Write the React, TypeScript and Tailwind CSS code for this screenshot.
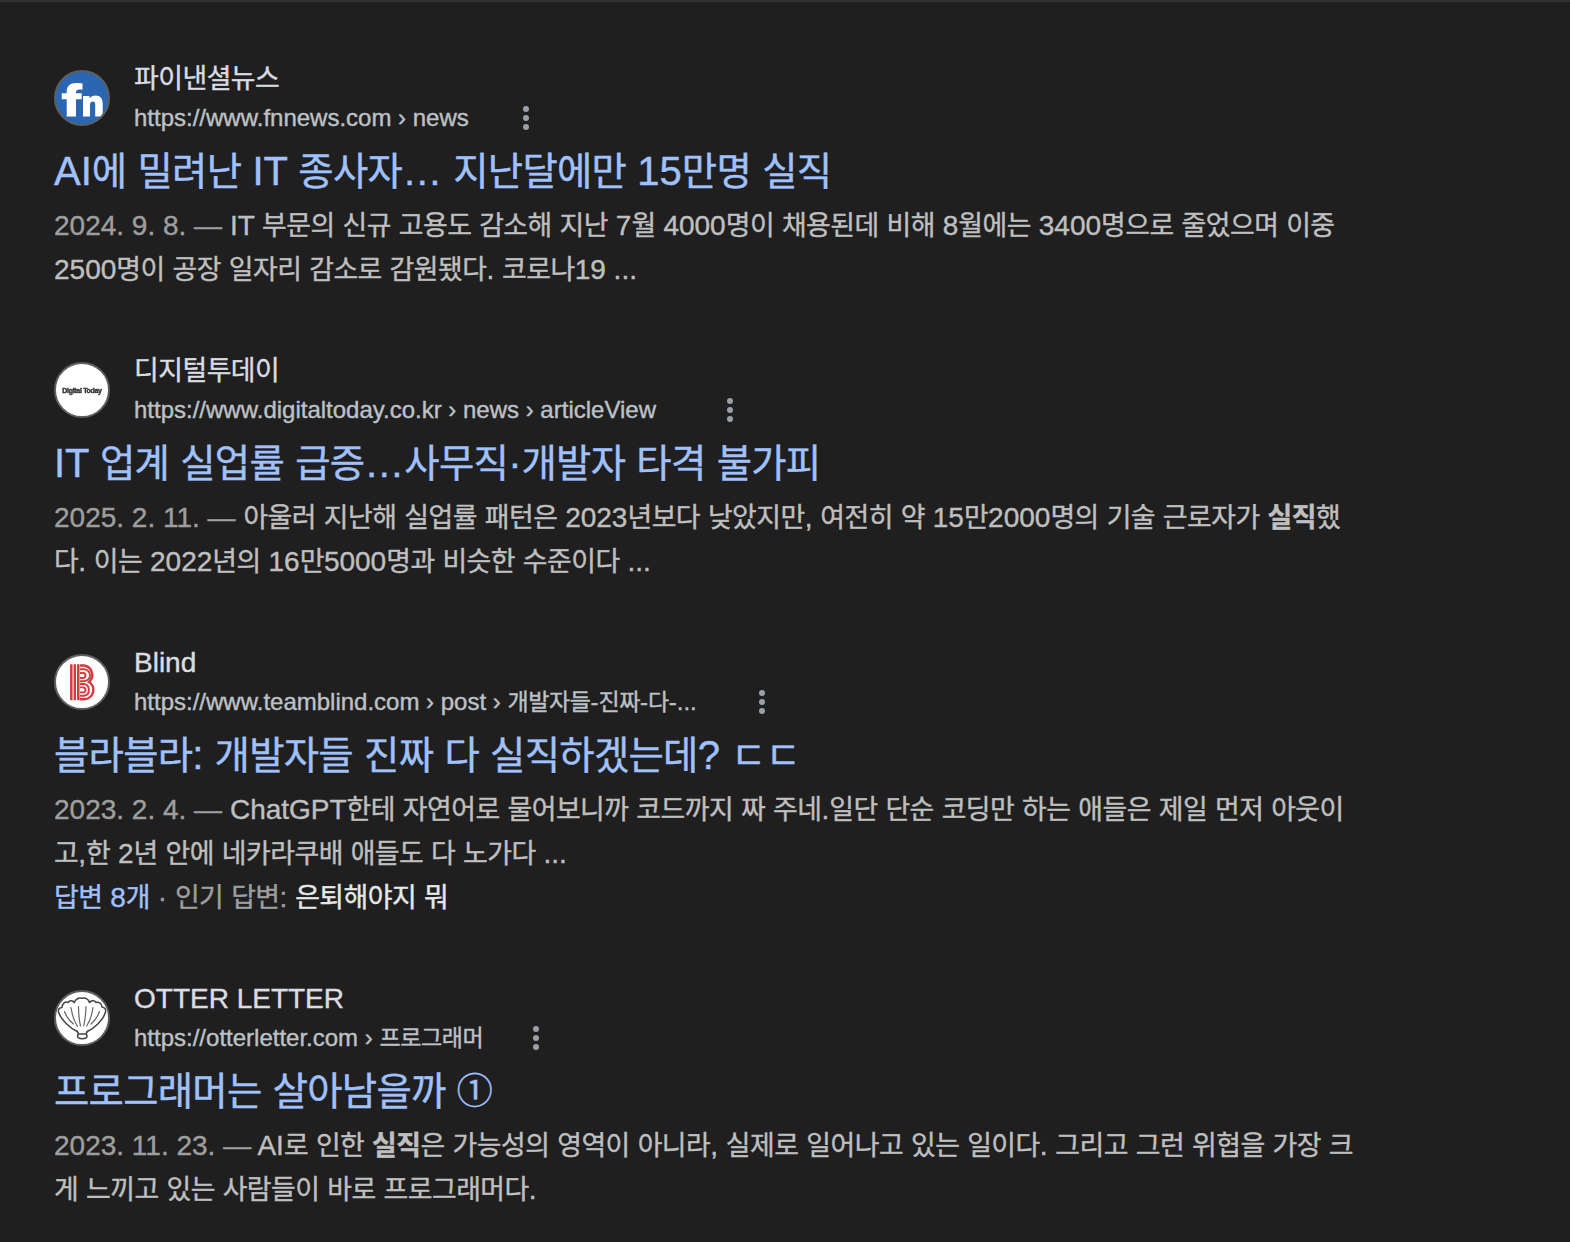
import React from "react";

const HANGUL = /([\u1100-\u11ff\u3130-\u318f\uac00-\ud7af]+|[\u2460-\u2473])/;

/** Latin text keeps the parent's face; Hangul runs get a slightly narrower Korean face. */
function T({ children }: { children: string }) {
  return (
    <>
      {children.split(HANGUL).map((part, i) => {
        if (i % 2 === 0) return part;
        const circled = part >= "\u2460" && part <= "\u2473";
        return (
          <span
            key={i}
            className={
              circled
                ? "relative -top-px font-['Noto_Sans_CJK_KR',sans-serif] text-[0.9em] leading-[0]"
                : "font-['Noto_Sans_CJK_KR',sans-serif] text-[0.96em] leading-[0] tracking-[-0.019em]"
            }
          >
            {part}
          </span>
        );
      })}
    </>
  );
}

function Badge({ children, bg = "bg-white" }: { children: React.ReactNode; bg?: string }) {
  return (
    <div
      className={`flex h-14 w-14 shrink-0 items-center justify-center overflow-hidden rounded-full border-2 border-[#5c5f5e] ${bg}`}
    >
      {children}
    </div>
  );
}

function FnLogo() {
  return (
    <Badge bg="bg-[#2a66b1]">
      <svg viewBox="0 0 52 52" className="h-full w-full" fill="#fff">
        <path d="M10.700 44.500V27.300H5.700v-6h5V20c0-6 3.300-9 9.300-9 2.500 0 5 .2 6.500.6v6.200c-1-.3-2-.4-3-.4-2.500 0-3.500 1-3.500 3v.9h5.700v6H20v17.200z" />
        <path d="M27 44.500V24h6.500v2.500c1.300-2 3.500-3 6.200-3 4.500 0 7 2.800 7 8v13h-7.500V32.500c0-2-.7-3-2.300-3-1.900 0-2.900 1.300-2.900 3.500v11.500z" />
      </svg>
    </Badge>
  );
}

function DigitalTodayLogo() {
  return (
    <Badge>
      <span className="whitespace-nowrap font-['Liberation_Sans',sans-serif] text-[7px] font-bold leading-none tracking-[-0.32px] text-[#333] blur-[0.4px]">
        Digital Today
      </span>
    </Badge>
  );
}

function BlindLogo() {
  return (
    <Badge>
      <svg viewBox="0 0 52 52" className="h-full w-full blur-[0.3px]" fill="none" stroke="#d33c42" strokeWidth="1.900">
        <path d="M15.300 8.300v36M18.800 8.300v36M22.300 8.300v36" strokeWidth="2.500" />
        <path d="M24 9.500h4a9.500 9.500 0 0 1 5 16.500a9.300 9.300 0 0 1-5 17.200h-4" strokeWidth="2.500" />
        <path d="M24 13.200h4a6 6 0 0 1 0 12h-4M24 28h4a6 6 0 0 1 0 11.800h-4" />
        <path d="M24 17h3a2.500 2.500 0 0 1 0 5h-3M24 31.400h3a2.500 2.500 0 0 1 0 5h-3" />
      </svg>
    </Badge>
  );
}

function ShellLogo() {
  return (
    <Badge>
      <svg
        viewBox="0 0 52 52"
        className="h-full w-full blur-[0.35px]"
        fill="none"
        stroke="#444"
        strokeWidth="1.500"
        strokeLinejoin="round"
        strokeLinecap="round"
      >
        <path d="M21.300 39.500C14 36 5 28 2.500 20c-.5-2.500 1-4.500 3.500-4.500 0-3.500 3-6.500 6-5 1.500-2.500 5-2 6.300 0C19.500 7 23 5.500 26 6.200c3-1 6.500.8 7.500 4.300 1.500-2 5-2.500 6.500 0 3-1 6 1.500 6 4.500 3 .3 4 2.500 3.500 5-2 8-11 16-18.200 19.500" />
        <path d="M21.300 39.500c1.500 1.500 1.200 3 .2 4.500 0 3.500 9.500 3.500 9.500 0-1-1.500-1-3 .3-4.500M23.500 42h5.500" />
        <path d="M8.500 19.500c1.500 4.500 5 9.500 9 12.500M15 15.500c1 7 3 13.500 6.500 19M22.500 14.500c0 7 .5 13 2 19.500M30 14.500c0 7-1 13-2.300 19.500M37 15.500c-1 7-3 13.500-6.300 18.500M43.500 19.500c-1.500 4.500-5 9.500-8.500 12.500" strokeWidth="1.200" stroke="#666" />
      </svg>
    </Badge>
  );
}

function MoreDots() {
  return (
    <svg viewBox="0 0 8 26" className="h-[26px] w-2" fill="#9aa0a6">
      <circle cx="4" cy="4" r="3" />
      <circle cx="4" cy="13" r="3" />
      <circle cx="4" cy="22" r="3" />
    </svg>
  );
}

interface Result {
  logo: React.ReactNode;
  site: string;
  url: string;
  urlWidth: string;
  title: string;
  date: string;
  snippet: React.ReactNode;
  extra?: React.ReactNode;
}

const results: Result[] = [
  {
    logo: <FnLogo />,
    site: "파이낸셜뉴스",
    url: "https://www.fnnews.com › news",
    urlWidth: "w-[388px]",
    title: "AI에 밀려난 IT 종사자… 지난달에만 15만명 실직",
    date: "2024. 9. 8.",
    snippet: (
      <>
        <T>IT 부문의 신규 고용도 감소해 지난 7월 4000명이 채용된데 비해 8월에는 3400명으로 줄었으며 이중</T>
        <br />
        <T>2500명이 공장 일자리 감소로 감원됐다. 코로나19 ...</T>
      </>
    ),
  },
  {
    logo: <DigitalTodayLogo />,
    site: "디지털투데이",
    url: "https://www.digitaltoday.co.kr › news › articleView",
    urlWidth: "w-[592px]",
    title: "IT 업계 실업률 급증…사무직·개발자 타격 불가피",
    date: "2025. 2. 11.",
    snippet: (
      <>
        <T>아울러 지난해 실업률 패턴은 2023년보다 낮았지만, 여전히 약 15만2000명의 기술 근로자가 </T>
        <b>
          <T>실직</T>
        </b>
        <T>했</T>
        <br />
        <T>다. 이는 2022년의 16만5000명과 비슷한 수준이다 ...</T>
      </>
    ),
  },
  {
    logo: <BlindLogo />,
    site: "Blind",
    url: "https://www.teamblind.com › post › 개발자들-진짜-다-...",
    urlWidth: "w-[624px]",
    title: "블라블라: 개발자들 진짜 다 실직하겠는데? ㄷㄷ",
    date: "2023. 2. 4.",
    snippet: (
      <>
        <T>ChatGPT한테 자연어로 물어보니까 코드까지 짜 주네.일단 단순 코딩만 하는 애들은 제일 먼저 아웃이</T>
        <br />
        <T>고,한 2년 안에 네카라쿠배 애들도 다 노가다 ...</T>
      </>
    ),
    extra: (
      <p className="text-[28px] leading-[44px] text-[#9e9e9e]">
        <a className="text-[#a0c1fc]">
          <T>답변 8개</T>
        </a>
        <T> · 인기 답변: </T>
        <span className="text-[#e8e8e8]">
          <T>은퇴해야지 뭐</T>
        </span>
      </p>
    ),
  },
  {
    logo: <ShellLogo />,
    site: "OTTER LETTER",
    url: "https://otterletter.com › 프로그래머",
    urlWidth: "w-[398px]",
    title: "프로그래머는 살아남을까 ①",
    date: "2023. 11. 23.",
    snippet: (
      <>
        <T>AI로 인한 </T>
        <b>
          <T>실직</T>
        </b>
        <T>은 가능성의 영역이 아니라, 실제로 일어나고 있는 일이다. 그리고 그런 위협을 가장 크</T>
        <br />
        <T>게 느끼고 있는 사람들이 바로 프로그래머다.</T>
      </>
    ),
  },
];

function ResultCard({ r }: { r: Result }) {
  return (
    <article>
      <header className="flex h-[76px] items-center gap-6">
        {r.logo}
        <div>
          <div className="h-10 text-[28px] leading-[38px] text-[#dadce0]">
            <T>{r.site}</T>
          </div>
          <div className="flex h-9 items-center">
            <cite className={`${r.urlWidth} text-2xl leading-9 not-italic text-[#bdc1c6]`}>
              <T>{r.url}</T>
            </cite>
            <MoreDots />
          </div>
        </div>
      </header>
      <h3 className="mt-[9px] text-[40px] leading-[52px] text-[#a0c1fc]">
        <T>{r.title}</T>
      </h3>
      <p className="mt-[7px] text-[28px] leading-[44px] text-[#bfbfbf]">
        <span className="text-[#9e9e9e]">{r.date} — </span>
        {r.snippet}
      </p>
      {r.extra}
    </article>
  );
}

export default function App() {
  return (
    <main className="flex h-[1242px] w-[1570px] flex-col gap-[60px] overflow-hidden whitespace-nowrap border-t-2 border-[#303134] bg-[#1f1f1f] pl-[54px] pt-[58px] font-['Liberation_Sans',Arial,sans-serif] [-webkit-text-stroke:0.4px_currentColor]">
      {results.map((r) => (
        <ResultCard key={r.title} r={r} />
      ))}
    </main>
  );
}
